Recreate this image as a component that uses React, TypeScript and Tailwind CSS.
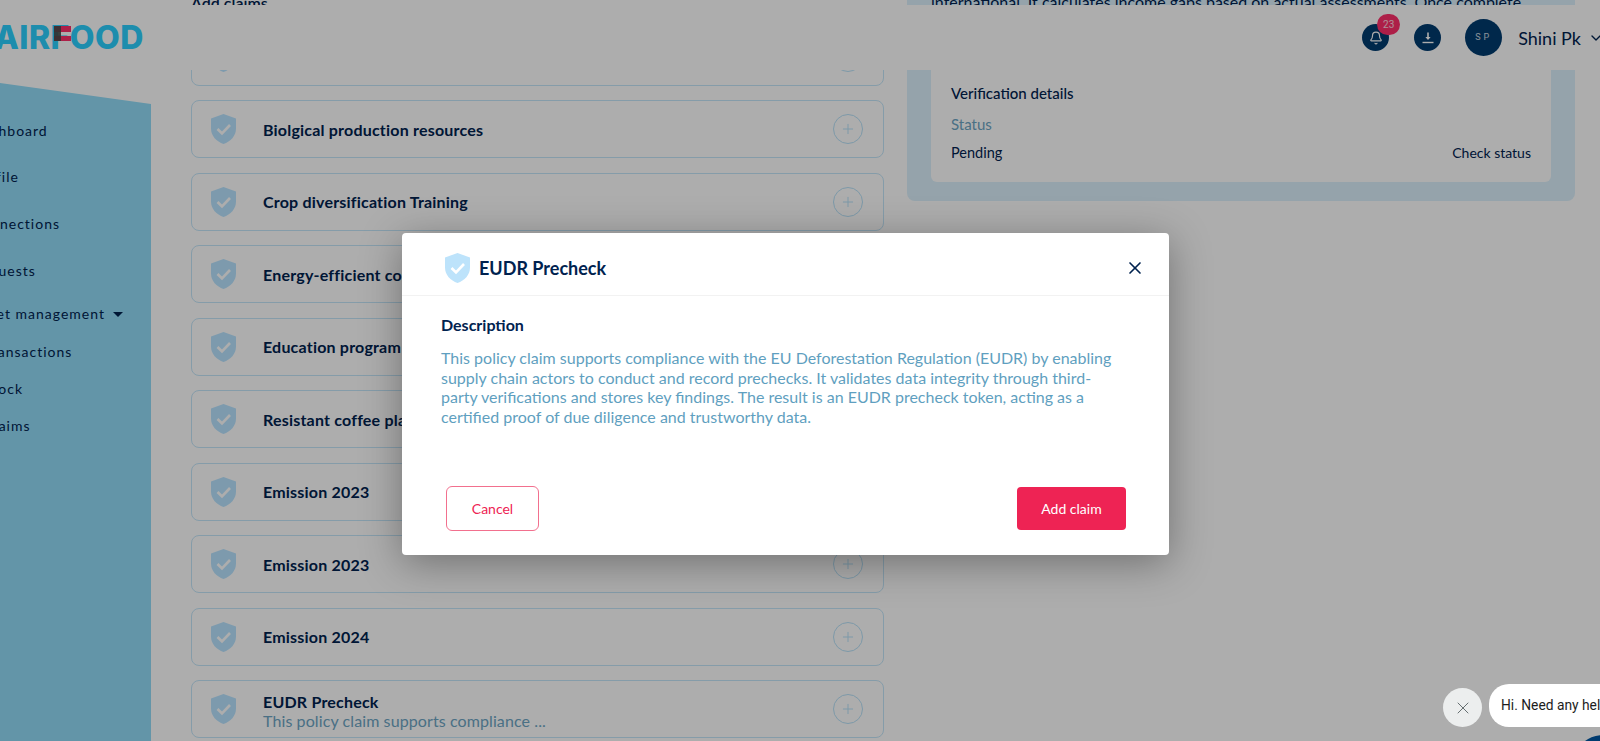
import React from 'react';
import { Bell, ChevronDown, Plus, X } from 'lucide-react';

const NAV = [
  { label: 'Dashboard', ml: '-ml-[28px]', h: 'h-[46px]' },
  { label: 'Profile', ml: '-ml-[28px]', h: 'h-[47px]' },
  { label: 'Connections', ml: '-ml-[28px]', h: 'h-[47px]' },
  { label: 'Requests', ml: '-ml-[28px]', h: 'h-[43px]' },
  { label: 'Asset management', ml: '-ml-[28px]', h: 'h-[38px]', caret: true },
  { label: 'Transactions', ml: '-ml-[16px]', h: 'h-[37px]' },
  { label: 'Stock', ml: '-ml-[16px]', h: 'h-[37px]' },
  { label: 'Claims', ml: '-ml-[16px]', h: 'h-[37px]' },
];

const CLAIMS = [
  { title: 'Biolgical production resources' },
  { title: 'Crop diversification Training' },
  { title: 'Energy-efficient cookstoves' },
  { title: 'Education program' },
  { title: 'Resistant coffee plants' },
  { title: 'Emission 2023' },
  { title: 'Emission 2023' },
  { title: 'Emission 2024' },
  { title: 'EUDR Precheck', sub: 'This policy claim supports compliance ...' },
];

function Shield({ className }: { className?: string }) {
  return (
    <svg viewBox="0 0 25 30" className={className} aria-hidden>
      <path
        d="M12.5 0 L25 4.5 V14.5 C25 22 19.5 27.5 12.5 30 C5.5 27.5 0 22 0 14.5 V4.5 Z"
        fill="currentColor"
      />
      <path d="M6.5 15 L11 19.5 L19 11" fill="none" stroke="#fff" strokeWidth="2.6" />
    </svg>
  );
}

function ClaimRow({ title, sub }: { title: string; sub?: string }) {
  return (
    <div className="flex h-[58px] shrink-0 items-center rounded-lg border border-[#c5e6fa] pl-[19px] pr-[20px]">
      <Shield className="h-[30px] w-[25px] shrink-0 text-[#b9e4ff]" />
      <div className={sub ? 'ml-[27px] min-w-0 flex-1 pt-[3px]' : 'ml-[27px] min-w-0 flex-1'}>
        <div className="text-[16px] font-bold leading-[19px] tracking-[0.2px] text-[#00224f]">{title}</div>
        {sub ? <div className="text-[16px] leading-[19px] tracking-[0.1px] text-[#6da5c4]">{sub}</div> : null}
      </div>
      <div className="flex h-[30px] w-[30px] items-center justify-center rounded-full border border-[#b9e2f9] text-[#b9e2f9]">
        <Plus size={16} strokeWidth={1.5} />
      </div>
    </div>
  );
}

export default function App() {
  return (
    <div className="relative flex h-[741px] w-[1600px] overflow-hidden bg-white font-['Lato',sans-serif] text-[#00224f]">
      {/* sidebar, page is scrolled sideways so labels are cut */}
      <aside className="mt-[83px] w-[151px] shrink-0 bg-[#92dcf8] pt-[38px] [clip-path:polygon(0_0,100%_21px,100%_100%,0_100%)]">
        <ul>
          {NAV.map((n) => (
            <li key={n.label} className={`${n.h} ${n.ml} flex items-start whitespace-nowrap text-[14px] leading-5 tracking-[1px] text-[#00224f]`}>
              {n.label}
              {n.caret ? <span className="ml-2 mt-[8px] h-0 w-0 border-x-[5px] border-t-[5px] border-x-transparent border-t-[#00224f]" /> : null}
            </li>
          ))}
        </ul>
      </aside>

      {/* claims list */}
      <main className="ml-[40px] flex w-[693px] shrink-0 flex-col">
        <div className="-mt-[7px] text-[16px] font-semibold leading-5">Add claims</div>
        <div className="mt-[14.5px] flex flex-col gap-[14.5px]">
          <ClaimRow title="Reforestation" />
          {CLAIMS.map((c, i) => (
            <ClaimRow key={i} title={c.title} sub={c.sub} />
          ))}
        </div>
      </main>

      {/* verification panel */}
      <section className="ml-[23px] h-[201px] w-[668px] shrink-0 rounded-b-lg bg-[#dcf1fc] px-[24px]">
        <p className="-mt-[8px] whitespace-nowrap text-[16px] leading-5">
          international. It calculates income gaps based on actual assessments. Once complete
        </p>
        <div className="mt-[50px] h-[120px] rounded-b-md bg-white px-[20px] pt-[21px]">
          <div className="text-[15px] font-medium leading-5">Verification details</div>
          <div className="mt-[11px] text-[15px] leading-5 text-[#6da5c4]">Status</div>
          <div className="mt-[9px] flex justify-between text-[14.5px] leading-5">
            <span>Pending</span>
            <span className="text-[14px]">Check status</span>
          </div>
        </div>
      </section>

      {/* fixed top bar */}
      <header className="absolute left-0 top-[5px] flex h-[65px] w-[1600px] items-center bg-white">
        <div className="-ml-[22px] flex items-center font-['Inter',sans-serif] text-[32px] font-extrabold leading-none tracking-[0.45px] text-[#2bd0ff]">
          <span>FAIR</span>
          <span className="relative">
            F
            <span className="absolute left-[3px] top-[4px] h-[6px] w-[17px] bg-[#ff2f6b]" />
            <span className="absolute left-[3px] top-[14px] h-[5px] w-[17px] bg-[#ff2f6b]" />
            <span className="absolute left-[3px] top-[4px] h-[15px] w-[7px] bg-[#4a4a4a] opacity-90" />
          </span>
          <span>OOD</span>
        </div>
        <div className="ml-auto flex items-center">
          <div className="relative flex h-[27px] w-[27px] items-center justify-center rounded-full bg-[#003b6f] text-white">
            <Bell size={14} />
            <span className="absolute -right-[11px] -top-[10px] flex h-[21px] w-[23px] items-center justify-center rounded-full bg-[#ff2f6b] font-['Roboto',sans-serif] text-[10px] text-white/80">
              23
            </span>
          </div>
          <div className="ml-[25px] flex h-[27px] w-[27px] items-center justify-center rounded-full bg-[#003b6f] text-white">
            <svg viewBox="0 0 14 14" className="h-[14px] w-[14px]" aria-hidden>
              <path d="M7 1.5V7.5" stroke="currentColor" strokeWidth="1.6" fill="none" />
              <path d="M4.4 6H9.6L7 9Z" fill="currentColor" />
              <path d="M1.5 11.5H12.5" stroke="currentColor" strokeWidth="1.4" fill="none" />
            </svg>
          </div>
          <div className="ml-[24px] flex h-[37px] w-[37px] items-center justify-center rounded-full bg-[#003b6f] font-['Roboto',sans-serif] text-[9px] tracking-[3px] text-white/80">
            SP
          </div>
          <span className="ml-[16px] text-[18px] leading-none">Shini Pk</span>
          <ChevronDown size={16} className="-mr-[4px] ml-[7px]" />
        </div>
      </header>

      {/* dimmed backdrop */}
      <div className="absolute inset-0 bg-black/32" />

      {/* modal */}
      <div className="absolute left-[402px] top-[233px] flex h-[322px] w-[767px] flex-col rounded bg-white shadow-[0_8px_40px_rgba(0,0,0,0.35)]">
        <div className="flex h-[63px] shrink-0 items-center border-b border-[#f2f2f2] pl-[43px] pr-[24px] pt-[8px]">
          <Shield className="h-[30px] w-[25px] text-[#bde3fb]" />
          <span className="ml-[9px] text-[18px] font-bold leading-none text-[#00224f]">EUDR Precheck</span>
          <X size={20} className="ml-auto text-[#00224f]" />
        </div>
        <div className="flex-1 px-[39px] pt-[19px]">
          <div className="text-[16px] font-bold leading-5 text-[#00224f]">Description</div>
          <p className="mt-[13px] w-[690px] text-[16px] leading-[19.5px] text-[#5f9fc0]">
            This policy claim supports compliance with the EU Deforestation Regulation (EUDR) by enabling
            <br />
            supply chain actors to conduct and record prechecks. It validates data integrity through third-
            <br />
            party verifications and stores key findings. The result is an EUDR precheck token, acting as a
            <br />
            certified proof of due diligence and trustworthy data.
          </p>
        </div>
        <div className="flex items-center justify-between pb-[24px] pl-[44px] pr-[43px]">
          <button type="button" className="h-[45px] w-[93px] rounded-md border border-[#f2708e] bg-white text-[14px] text-[#ee2354]">
            Cancel
          </button>
          <button type="button" className="h-[43px] w-[109px] rounded bg-[#ee2354] text-[14px] text-white">
            Add claim
          </button>
        </div>
      </div>

      {/* chat widget sits above the backdrop */}
      <div className="absolute left-[1443px] top-[684px] flex items-end">
        <div className="flex h-[39px] w-[39px] items-center justify-center rounded-full bg-[#eceeee] text-[#4a5558]">
          <X size={20} strokeWidth={1} />
        </div>
        <div className="ml-[7px] flex h-[43px] w-[200px] items-center rounded-[20px] bg-white pl-[12px] font-['Roboto',sans-serif] text-[13.8px] text-[#1d1d1d]">
          Hi. Need any help?
        </div>
      </div>
      <div className="absolute left-[1573px] top-[735px] h-[60px] w-[60px] rounded-full bg-[#003b6f]" />
    </div>
  );
}
